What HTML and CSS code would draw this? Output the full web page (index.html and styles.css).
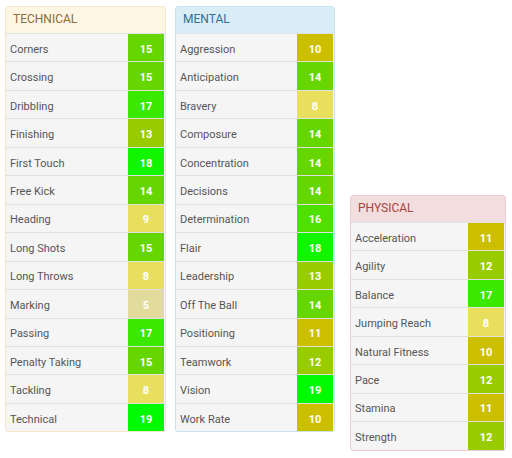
FILE: index.html
```html
<!DOCTYPE html>
<html>
<head>
<meta charset="utf-8">
<link rel="stylesheet" href="styles.css">
</head>
<body>
<div class="board">
  <div class="panel technical">
    <div class="head">TECHNICAL</div>
    <div class="row"><span class="name">Corners</span><span class="val v15">15</span></div>
    <div class="row"><span class="name">Crossing</span><span class="val v15">15</span></div>
    <div class="row"><span class="name">Dribbling</span><span class="val v17">17</span></div>
    <div class="row"><span class="name">Finishing</span><span class="val v13">13</span></div>
    <div class="row"><span class="name">First Touch</span><span class="val v18">18</span></div>
    <div class="row"><span class="name">Free Kick</span><span class="val v14">14</span></div>
    <div class="row"><span class="name">Heading</span><span class="val v9">9</span></div>
    <div class="row"><span class="name">Long Shots</span><span class="val v15">15</span></div>
    <div class="row"><span class="name">Long Throws</span><span class="val v8">8</span></div>
    <div class="row"><span class="name">Marking</span><span class="val v5">5</span></div>
    <div class="row"><span class="name">Passing</span><span class="val v17">17</span></div>
    <div class="row"><span class="name">Penalty Taking</span><span class="val v15">15</span></div>
    <div class="row"><span class="name">Tackling</span><span class="val v8">8</span></div>
    <div class="row"><span class="name">Technical</span><span class="val v19">19</span></div>
  </div>
  <div class="panel mental">
    <div class="head">MENTAL</div>
    <div class="row"><span class="name">Aggression</span><span class="val v10">10</span></div>
    <div class="row"><span class="name">Anticipation</span><span class="val v14">14</span></div>
    <div class="row"><span class="name">Bravery</span><span class="val v8">8</span></div>
    <div class="row"><span class="name">Composure</span><span class="val v14">14</span></div>
    <div class="row"><span class="name">Concentration</span><span class="val v14">14</span></div>
    <div class="row"><span class="name">Decisions</span><span class="val v14">14</span></div>
    <div class="row"><span class="name">Determination</span><span class="val v16">16</span></div>
    <div class="row"><span class="name">Flair</span><span class="val v18">18</span></div>
    <div class="row"><span class="name">Leadership</span><span class="val v13">13</span></div>
    <div class="row"><span class="name">Off The Ball</span><span class="val v14">14</span></div>
    <div class="row"><span class="name">Positioning</span><span class="val v11">11</span></div>
    <div class="row"><span class="name">Teamwork</span><span class="val v12">12</span></div>
    <div class="row"><span class="name">Vision</span><span class="val v19">19</span></div>
    <div class="row"><span class="name">Work Rate</span><span class="val v10">10</span></div>
  </div>
  <div class="panel physical">
    <div class="head">PHYSICAL</div>
    <div class="row"><span class="name">Acceleration</span><span class="val v11">11</span></div>
    <div class="row"><span class="name">Agility</span><span class="val v12">12</span></div>
    <div class="row"><span class="name">Balance</span><span class="val v17">17</span></div>
    <div class="row"><span class="name">Jumping Reach</span><span class="val v8">8</span></div>
    <div class="row"><span class="name">Natural Fitness</span><span class="val v10">10</span></div>
    <div class="row"><span class="name">Pace</span><span class="val v12">12</span></div>
    <div class="row"><span class="name">Stamina</span><span class="val v11">11</span></div>
    <div class="row"><span class="name">Strength</span><span class="val v12">12</span></div>
  </div>
</div>
</body>
</html>
```
FILE: styles.css
```css
html, body {
  margin: 0;
  padding: 0;
  background: #ffffff;
}
body {
  font-family: Roboto, "Liberation Sans", sans-serif;
}
.board {
  display: flex;
  align-items: flex-start;
  padding: 6px 0 0 5px;
}
.panel {
  box-sizing: border-box;
  border: 1px solid #ddd;
  border-radius: 3px;
  background: #f5f5f5;
  overflow: hidden;
}
.technical { width: 161px; border-color: #f5e8c8; }
.mental { width: 160px; margin-left: 9px; border-color: #c5e4ef; }
.physical { width: 156px; margin-left: 15px; margin-top: 189px; border-color: #ebccd1; }
.head {
  box-sizing: border-box;
  height: 27px;
  padding: 0 0 2px 7px;
  display: flex;
  align-items: center;
  font-size: 12px;
  border-bottom: 1px solid #e2e2e2;
}
.technical .head { background: #fcf6e3; color: #8a6d3b; }
.mental .head { background: #d9edf7; color: #31708f; }
.physical .head { background: #f2dede; color: #a94442; }
.row {
  box-sizing: border-box;
  height: 28.46px;
  display: flex;
  align-items: stretch;
  border-bottom: 1px solid #e0e0e0;
}
.row:last-child { border-bottom: none; height: 27.46px; }
.name {
  flex: 1;
  display: flex;
  align-items: center;
  padding: 3px 0 0 4px;
  font-size: 11px;
  color: #555;
}
.val {
  width: 36px;
  display: flex;
  align-items: center;
  justify-content: center;
  padding-top: 3px;
  font-size: 11px;
  font-weight: bold;
  color: #fff;
  margin-right: 1px;
}
.v5 { background: #e2dc9c; }
.v8, .v9 { background: #e8e05c; }
.v10, .v11 { background: #ccbf00; }
.v12, .v13 { background: #99cc00; }
.v14, .v15 { background: #66d600; }
.v16 { background: #4ee000; }
.v17 { background: #3ae800; }
.v18 { background: #11f500; }
.v19 { background: #00fa00; }
```
